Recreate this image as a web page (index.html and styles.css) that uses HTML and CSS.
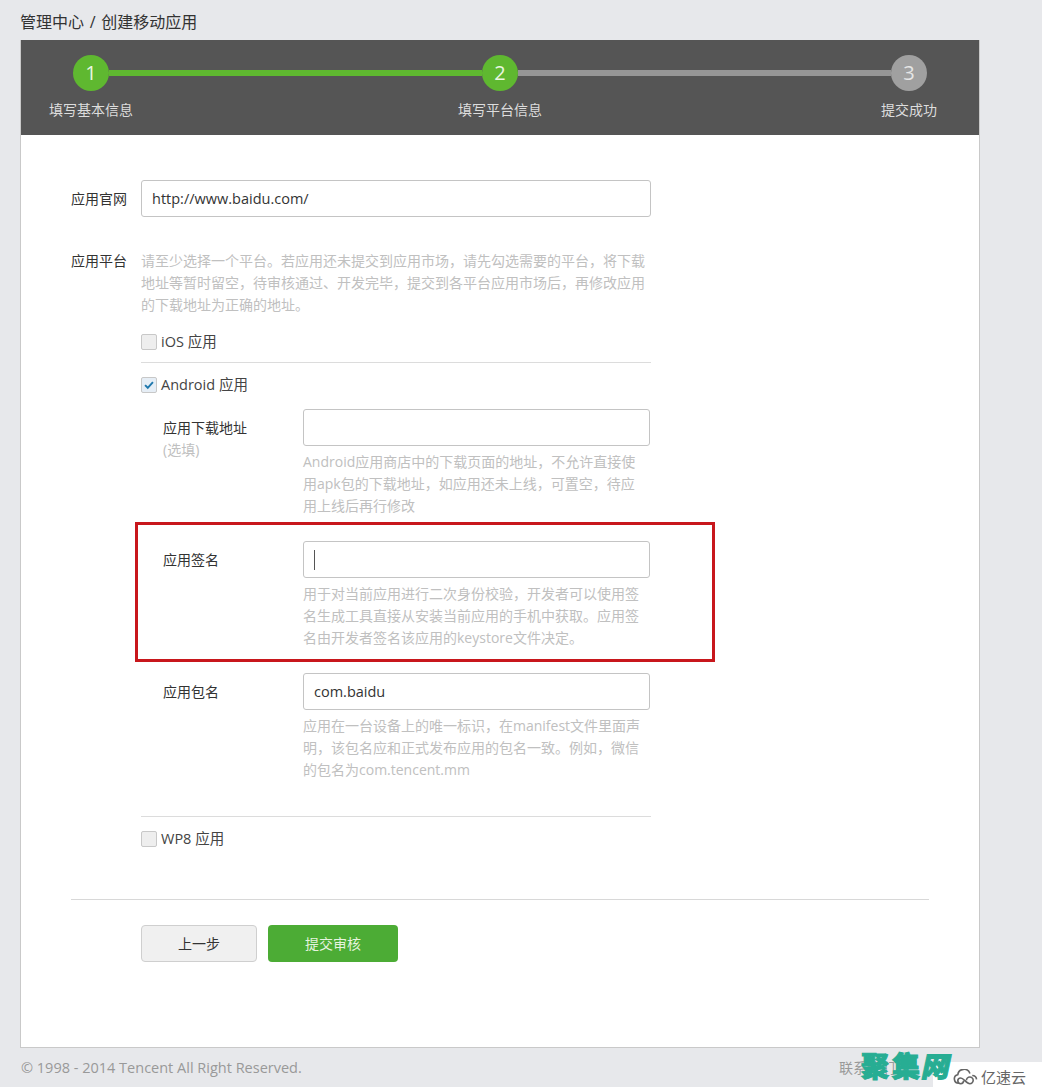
FILE: index.html
```html
<!DOCTYPE html>
<html lang="zh-CN">
<head>
<meta charset="utf-8">
<title>创建移动应用</title>
<link rel="stylesheet" href="styles.css">
</head>
<body>
<div class="page">
  <h1 class="crumb">管理中心 / 创建移动应用</h1>
  <main class="card">
    <header class="steps">
      <div class="track">
        <span class="dot on">1</span>
        <span class="bar on"></span>
        <span class="dot on">2</span>
        <span class="bar"></span>
        <span class="dot">3</span>
      </div>
      <div class="step-labels">
        <span>填写基本信息</span>
        <span>填写平台信息</span>
        <span>提交成功</span>
      </div>
    </header>
    <form class="form">
      <div class="row site">
        <label class="row-label">应用官网</label>
        <input class="input wide" type="text" value="http://www.baidu.com/">
      </div>
      <div class="row platform">
        <label class="row-label">应用平台</label>
        <div class="platform-body">
          <p class="help">请至少选择一个平台。若应用还未提交到应用市场，请先勾选需要的平台，将下载<br>地址等暂时留空，待审核通过、开发完毕，提交到各平台应用市场后，再修改应用<br>的下载地址为正确的地址。</p>
          <div class="check ios"><span class="box"></span>iOS 应用</div>
          <div class="check android">
            <span class="box checked"><svg viewBox="0 0 16 16" width="14" height="14"><path d="M3.5 8.2 6.6 11.2 12.500 4.800" fill="none" stroke="#1f78ad" stroke-width="2.200"/></svg></span>Android 应用
          </div>
          <div class="sub">
            <div class="sub-label">应用下载地址<small>(选填)</small></div>
            <div class="sub-field">
              <input class="input" type="text">
              <p class="help">Android应用商店中的下载页面的地址，不允许直接使<br>用apk包的下载地址，如应用还未上线，可置空，待应<br>用上线后再行修改</p>
            </div>
          </div>
          <div class="sub sign">
            <span class="annotation"></span>
            <div class="sub-label">应用签名</div>
            <div class="sub-field">
              <div class="input focus"><span class="caret"></span></div>
              <p class="help">用于对当前应用进行二次身份校验，开发者可以使用签<br>名生成工具直接从安装当前应用的手机中获取。应用签<br>名由开发者签名该应用的keystore文件决定。</p>
            </div>
          </div>
          <div class="sub pkg">
            <div class="sub-label">应用包名</div>
            <div class="sub-field">
              <input class="input" type="text" value="com.baidu">
              <p class="help">应用在一台设备上的唯一标识，在manifest文件里面声<br>明，该包名应和正式发布应用的包名一致。例如，微信<br>的包名为com.tencent.mm</p>
            </div>
          </div>
          <div class="check wp"><span class="box"></span>WP8 应用</div>
        </div>
      </div>
      <div class="actions">
        <button class="btn prev" type="button">上一步</button>
        <button class="btn submit" type="button">提交审核</button>
      </div>
    </form>
  </main>
  <footer class="foot">
    <span>© 1998 - 2014 Tencent All Right Reserved.</span>
    <span class="contact">联系我们</span>
  </footer>
  <div class="mark-sub">
    <svg viewBox="0 0 26 16" width="25" height="16"><path d="M6 14.500a4.500 4.500 0 0 1-1-8.900 6.500 6.500 0 0 1 12.600-1.200M11 12a3 3 0 1 1-3-3c3 0 6 6 9.500 6a3.500 3.500 0 1 0-3.500-3.500M20 6.500a4.500 4.500 0 0 1 4.500 4" fill="none" stroke="#666" stroke-width="1.700"/></svg>
    <span>亿速云</span>
  </div>
  <div class="mark-main">聚集<span class="slant">网</span></div>
</div>
</body>
</html>
```
FILE: styles.css
```css
* { box-sizing: border-box; }
html, body { margin: 0; padding: 0; }
body {
  background: #e7e8eb;
  font-family: "Open Sans", "Noto Sans CJK SC", sans-serif;
  font-size: 14px;
  color: #333;
}
.page {
  position: relative;
  width: 1042px;
  height: 1087px;
  overflow: hidden;
  padding: 0 20px;
}
.crumb {
  margin: 0;
  height: 40px;
  padding-top: 10px;
  font-size: 16px;
  line-height: 24px;
  font-weight: 400;
  word-spacing: 1.5px;
  color: #333;
}
.card {
  width: 960px;
  height: 1008px;
  background: #fff;
  border: 1px solid #c9c9c9;
  border-top: 0;
}
.steps {
  height: 95px;
  background: #555;
  padding-top: 15px;
}
.track {
  display: flex;
  align-items: center;
  padding: 0 52px;
}
.dot {
  flex: none;
  width: 36px;
  height: 36px;
  border-radius: 50%;
  background: #a0a0a0;
  color: #e6e6e6;
  font-size: 20px;
  line-height: 36px;
  text-align: center;
}
.dot.on { background: #5fb830; color: #eaf6e2; }
.bar {
  flex: 1;
  height: 6px;
  background: #969696;
}
.bar.on { background: #5fb830; }
.step-labels {
  display: flex;
  justify-content: space-between;
  padding: 8px 28px 0;
  line-height: 22px;
  color: #ddd;
}
.step-labels span { width: 84px; text-align: center; }
.form { padding: 45px 50px 0; }
.row { display: flex; }
.row-label {
  flex: none;
  width: 56px;
  margin-right: 14px;
  line-height: 22px;
  color: #333;
}
.site .row-label { padding-top: 8px; }
.input {
  display: block;
  width: 347px;
  height: 37px;
  margin: 0;
  padding: 0 10px;
  background: #fff;
  border: 1px solid #c4c4c4;
  border-radius: 3px;
  font: inherit;
  font-size: 14.5px;
  color: #333;
  outline: 0;
}
.input.wide { width: 510px; }
.focus { display: flex; align-items: center; }
.caret { width: 1px; height: 20px; background: #555; }
.platform { margin-top: 33px; }
.platform-body { width: 510px; }
.help {
  margin: 0;
  line-height: 22px;
  color: #c0c0c0;
  white-space: nowrap;
}
.check {
  position: relative;
  display: flex;
  align-items: center;
  height: 22px;
  line-height: 22px;
  font-size: 14.5px;
  color: #444;
}
.box {
  flex: none;
  display: flex;
  align-items: center;
  justify-content: center;
  width: 16px;
  height: 16px;
  margin-right: 4px;
  background: #eee;
  border: 1px solid #c8c8c8;
  border-radius: 2px;
}
.box.checked { background: #e6eef6; }
.ios { margin-top: 15px; }
.ios::after {
  content: "";
  display: block;
  position: absolute;
  left: 0;
  right: 0;
  bottom: -10px;
  border-top: 1px solid #dcdcdc;
}
.android { margin-top: 21px; }
.sub {
  display: flex;
  padding-left: 22px;
  margin-top: 13px;
}
.sub-label {
  flex: none;
  width: 140px;
  padding-top: 8px;
  line-height: 22px;
  color: #333;
}
.sub-label small {
  display: block;
  font-size: 14px;
  color: #c0c0c0;
}
.sub-field { width: 347px; }
.sub-field .help { margin-top: 5px; }
.sign {
  position: relative;
  margin-top: 24px;
}
.annotation {
  position: absolute;
  left: -6px;
  top: -19px;
  width: 580px;
  height: 140px;
  border: 3px solid #c8171c;
  pointer-events: none;
}
.pkg {
  margin-top: 24px;
  padding-bottom: 35px;
  border-bottom: 1px solid #dcdcdc;
}
.wp { margin-top: 11px; }
.actions {
  display: flex;
  gap: 11px;
  margin-top: 49px;
  padding: 25px 0 0 70px;
  border-top: 1px solid #d8d8d8;
}
.btn {
  height: 37px;
  border-radius: 4px;
  font: inherit;
  padding: 0 0 2px;
}
.prev {
  width: 116px;
  background: #f0f0f0;
  border: 1px solid #cfcfcf;
  color: #333;
}
.submit {
  width: 130px;
  background: #4cac35;
  border: 0;
  color: #e6f3df;
}
.foot {
  display: flex;
  justify-content: space-between;
  width: 960px;
  padding: 9px 83px 0 1px;
  line-height: 22px;
  font-size: 14.5px;
  color: #999;
}
.contact { font-size: 14px; margin-right: 2px; }
.mark-main {
  position: absolute;
  left: 861px;
  top: 1047px;
  font-family: "Noto Sans CJK SC", sans-serif;
  font-size: 28px;
  line-height: 36px;
  font-weight: 900;
  letter-spacing: 3px;
  color: #27ad93;
  -webkit-text-stroke: 1px #27ad93;
}
.slant { display: inline-block; transform: skewX(-12deg); }
.mark-sub {
  position: absolute;
  left: 933px;
  top: 1062px;
  width: 109px;
  height: 25px;
  padding: 5px 0 0 20px;
  background: #fff;
  display: flex;
  align-items: center;
  gap: 3px;
  font-size: 15px;
  line-height: 20px;
  color: #666;
}
```
